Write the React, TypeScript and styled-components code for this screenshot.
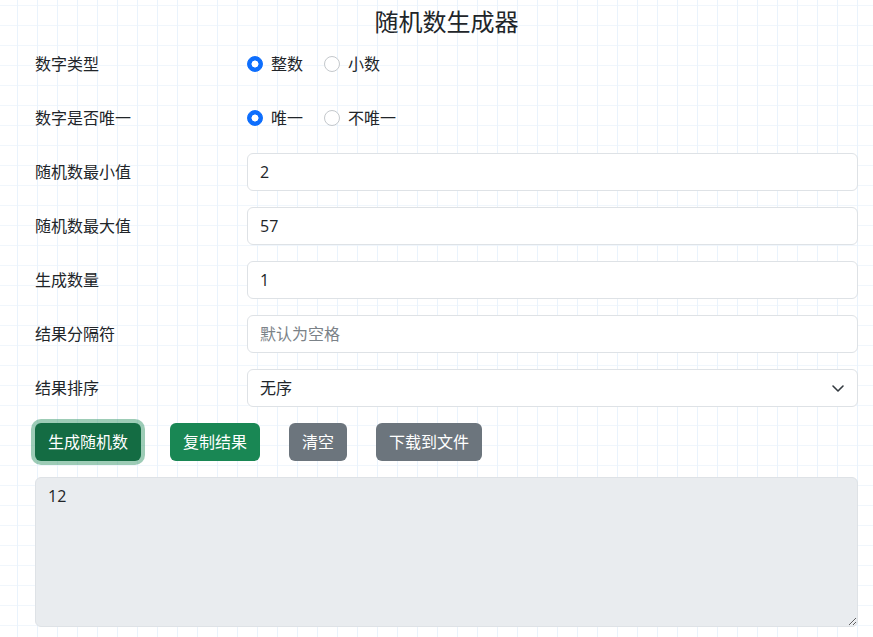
import React, { useState } from "react";
import styled, { createGlobalStyle } from "styled-components";

const GlobalStyle = createGlobalStyle`
  html, body {
    margin: 0;
    padding: 0;
  }
  body {
    min-height: 100vh;
    color: #212529;
    font-family: "Open Sans", "Noto Sans CJK SC", sans-serif;
    font-size: 16px;
    line-height: 1.5;
    background-color: #ffffff;
    background-image:
      linear-gradient(to right, #eaf3fc 1px, transparent 1px),
      linear-gradient(to bottom, #f0f6fc 1px, transparent 1px);
    background-size: 20px 20px;
    background-position: 17px 0, 0 5px;
  }
`;

const Container = styled.div`
  width: 823px;
  margin-left: 35px;
  display: flex;
  flex-direction: column;
  gap: 16px;
  padding-bottom: 10px;
`;

const Title = styled.h1`
  margin: 0 0 -16px;
  height: 45px;
  line-height: 44px;
  text-align: center;
  font-size: 24px;
  font-weight: 400;
  color: #212529;
`;

const Row = styled.div`
  display: grid;
  grid-template-columns: 212px 1fr;
  align-items: center;
  min-height: 38px;
`;

const Label = styled.label`
  font-size: 16px;
  color: #212529;
`;

const RadioGroup = styled.div`
  display: flex;
  align-items: center;
  gap: 21px;
`;

const RadioOption = styled.label`
  display: flex;
  align-items: center;
  gap: 8px;
  cursor: pointer;
`;

const Radio = styled.input.attrs({ type: "radio" })`
  appearance: none;
  margin: 0;
  width: 16px;
  height: 16px;
  border-radius: 50%;
  border: 1px solid #c4c8cc;
  background: #fff;
  &:checked {
    border-color: #0d6efd;
    background: radial-gradient(circle, #fff 3.2px, #0d6efd 3.8px);
  }
`;

const TextInput = styled.input`
  box-sizing: border-box;
  width: 100%;
  height: 38px;
  padding: 6px 12px;
  border: 1px solid #dee2e6;
  border-radius: 6px;
  background: #fff;
  font: inherit;
  color: #212529;
  outline: none;
  &::placeholder {
    color: #7b8288;
  }
`;

const SelectWrap = styled.div`
  position: relative;
`;

const Select = styled.select`
  box-sizing: border-box;
  width: 100%;
  height: 38px;
  padding: 6px 36px 6px 12px;
  border: 1px solid #dee2e6;
  border-radius: 6px;
  background: #fff;
  font: inherit;
  color: #212529;
  appearance: none;
  outline: none;
`;

const Chevron = styled.svg`
  position: absolute;
  right: 12px;
  top: 11px;
  width: 16px;
  height: 16px;
  pointer-events: none;
`;

const ButtonBar = styled.div`
  display: flex;
  gap: 29px;
`;

const Button = styled.button<{ $variant: "success" | "secondary"; $focused?: boolean }>`
  height: 38px;
  padding: 0 12px;
  border: 1px solid transparent;
  border-radius: 6px;
  font: inherit;
  color: #fff;
  cursor: pointer;
  background: ${({ $variant, $focused }) =>
    $variant === "success" ? ($focused ? "#146c43" : "#198754") : "#6c757d"};
  box-shadow: ${({ $focused }) => ($focused ? "0 0 0 4px rgba(60, 153, 110, 0.5)" : "none")};
`;

const Output = styled.textarea`
  box-sizing: border-box;
  width: 100%;
  height: 150px;
  padding: 6px 12px;
  border: 1px solid #dee2e6;
  border-radius: 6px;
  background: #e9ecef;
  font: inherit;
  color: #212529;
  outline: none;
`;

const App: React.FC = () => {
  const [intType, setIntType] = useState(true);
  const [unique, setUnique] = useState(true);

  return (
    <>
      <GlobalStyle />
      <Container>
        <Title>随机数生成器</Title>
        <Row>
          <Label>数字类型</Label>
          <RadioGroup>
            <RadioOption>
              <Radio name="type" checked={intType} onChange={() => setIntType(true)} />
              整数
            </RadioOption>
            <RadioOption>
              <Radio name="type" checked={!intType} onChange={() => setIntType(false)} />
              小数
            </RadioOption>
          </RadioGroup>
        </Row>
        <Row>
          <Label>数字是否唯一</Label>
          <RadioGroup>
            <RadioOption>
              <Radio name="unique" checked={unique} onChange={() => setUnique(true)} />
              唯一
            </RadioOption>
            <RadioOption>
              <Radio name="unique" checked={!unique} onChange={() => setUnique(false)} />
              不唯一
            </RadioOption>
          </RadioGroup>
        </Row>
        <Row>
          <Label>随机数最小值</Label>
          <TextInput defaultValue="2" />
        </Row>
        <Row>
          <Label>随机数最大值</Label>
          <TextInput defaultValue="57" />
        </Row>
        <Row>
          <Label>生成数量</Label>
          <TextInput defaultValue="1" />
        </Row>
        <Row>
          <Label>结果分隔符</Label>
          <TextInput placeholder="默认为空格" />
        </Row>
        <Row>
          <Label>结果排序</Label>
          <SelectWrap>
            <Select defaultValue="none">
              <option value="none">无序</option>
              <option value="asc">升序</option>
              <option value="desc">降序</option>
            </Select>
            <Chevron viewBox="0 0 16 16">
              <path d="m3 6 5 5 5-5" fill="none" stroke="#343a40" strokeWidth="1.6" strokeLinecap="round" strokeLinejoin="round" />
            </Chevron>
          </SelectWrap>
        </Row>
        <ButtonBar>
          <Button $variant="success" $focused>生成随机数</Button>
          <Button $variant="success">复制结果</Button>
          <Button $variant="secondary">清空</Button>
          <Button $variant="secondary">下载到文件</Button>
        </ButtonBar>
        <Output readOnly value="12" />
      </Container>
    </>
  );
};

export default App;
